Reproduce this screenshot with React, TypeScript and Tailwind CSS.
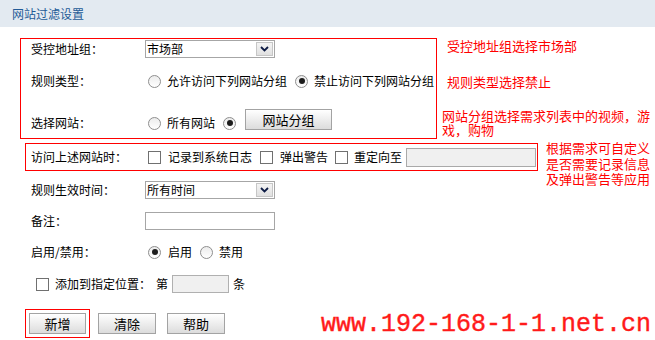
import React from 'react'

function Radio({ checked }: { checked?: boolean }) {
  return (
    <span className="flex h-[13px] w-[13px] shrink-0 items-center justify-center rounded-full border border-[#8e8e8e] bg-linear-to-b from-[#ececec] to-white">
      {checked && <span className="h-[6px] w-[6px] rounded-full bg-[#1c1c1c]" />}
    </span>
  )
}

function Checkbox() {
  return <span className="block h-[13px] w-[13px] shrink-0 border border-[#707070] bg-white" />
}

function Select({ value }: { value: string }) {
  return (
    <div className="flex h-[18px] w-[130px] items-center border border-[#a6a6a6] bg-white">
      <span className="flex-1 pl-[1px] leading-none">{value}</span>
      <span className="mr-[1px] flex h-[14px] w-[17px] items-center justify-center border border-[#c6c6c6] bg-linear-to-b from-[#f4f4f4] to-[#e0e0e0]">
        <svg width="9" height="6" viewBox="0 0 9 6">
          <path d="M1 1 L4.5 4.5 L8 1" stroke="#0d1b45" strokeWidth="1.8" fill="none" />
        </svg>
      </span>
    </div>
  )
}

function Button({ label, className }: { label: string; className?: string }) {
  return (
    <div
      className={`flex h-[21px] items-center justify-center border border-[#a3a3a3] bg-linear-to-b from-white to-[#dcdcdc] text-[13px] leading-none ${className ?? ''}`}
    >
      {label}
    </div>
  )
}

export default function App() {
  return (
    <div className="h-[340px] w-[655px] overflow-hidden whitespace-nowrap bg-white font-['Noto_Sans_CJK_SC',sans-serif] text-[12px] text-black">
      <div className="flex h-[27px] items-center bg-[#e3eaf1] pl-[12px] text-[12px] text-[#235b97]">
        网站过滤设置
      </div>

      {/* 受控地址组 / 规则类型 / 选择网站 */}
      <div className="mt-[11px] flex items-start">
        <div className="ml-[20px] flex h-[101px] w-[417px] shrink-0 flex-col border border-[#ff0000] pl-[10px]">
          <div className="flex h-[20px] items-center">
            <span className="w-[114px]">受控地址组：</span>
            <Select value="市场部" />
          </div>
          <div className="mt-[12px] flex h-[20px] items-center">
            <span className="w-[114px]">规则类型：</span>
            <span className="ml-[3px]"><Radio /></span>
            <span className="ml-[6px]">允许访问下列网站分组</span>
            <span className="ml-[8px]"><Radio checked /></span>
            <span className="ml-[6px]">禁止访问下列网站分组</span>
          </div>
          <div className="mt-[22px] flex h-[20px] items-center">
            <span className="w-[114px]">选择网站：</span>
            <span className="ml-[3px]"><Radio /></span>
            <span className="ml-[6px]">所有网站</span>
            <span className="ml-[8px]"><Radio checked /></span>
            <Button label="网站分组" className="mb-[8px] ml-[9px] w-[87px]" />
          </div>
        </div>
        <div className="ml-[10px] flex flex-col text-[13px] text-[#ff0000]">
          <div className="leading-[16px]">受控地址组选择市场部</div>
          <div className="mt-[20px] leading-[16px]">规则类型选择禁止</div>
          <div className="mt-[19px] -ml-[5px] leading-[14px]">
            <div>网站分组选择需求列表中的视频，游</div>
            <div>戏，购物</div>
          </div>
        </div>
      </div>

      {/* 访问上述网站时 */}
      <div className="mt-[4px] flex h-[28px] items-start">
        <div className="ml-[25px] flex h-[28px] w-[513px] shrink-0 items-center border border-[#ff0000] pl-[5px] [&>*]:shrink-0">
          <span className="w-[117px]">访问上述网站时：</span>
          <Checkbox />
          <span className="ml-[7px]">记录到系统日志</span>
          <span className="ml-[8px]"><Checkbox /></span>
          <span className="ml-[7px]">弹出警告</span>
          <span className="ml-[7px]"><Checkbox /></span>
          <span className="ml-[6px]">重定向至</span>
          <span className="ml-[4px] h-[19px] w-[130px] border border-[#a9a9a9] bg-[#f0f0f0]" />
        </div>
        <div className="-mt-[3px] ml-[8px] text-[13px] leading-[15.5px] text-[#ff0000]">
          <div>根据需求可自定义</div>
          <div>是否需要记录信息</div>
          <div>及弹出警告等应用</div>
        </div>
      </div>

      <div className="mt-[10px] flex h-[18px] items-center pl-[31px]">
        <span className="w-[114px]">规则生效时间：</span>
        <Select value="所有时间" />
      </div>

      <div className="mt-[13px] flex h-[18px] items-center pl-[31px]">
        <span className="w-[114px]">备注：</span>
        <span className="h-[18px] w-[130px] border border-[#a6a6a6] bg-white" />
      </div>

      <div className="mt-[15px] flex h-[14px] items-center pl-[31px]">
        <span className="w-[114px]">启用/禁用：</span>
        <span className="ml-[3px]"><Radio checked /></span>
        <span className="ml-[7px]">启用</span>
        <span className="ml-[8px]"><Radio /></span>
        <span className="ml-[6px]">禁用</span>
      </div>

      <div className="mt-[16px] flex h-[18px] items-center pl-[36px]">
        <Checkbox />
        <span className="ml-[6px]">添加到指定位置：</span>
        <span className="ml-[5px]">第</span>
        <span className="ml-[4px] h-[18px] w-[57px] border border-[#b0b0b0] bg-[#f0f0f0]" />
        <span className="ml-[4px]">条</span>
      </div>

      <div className="mt-[16px] flex h-[28px] items-center pl-[25px]">
        <div className="border border-[#ff0000] p-[3px]">
          <Button label="新增" className="w-[57px]" />
        </div>
        <Button label="清除" className="ml-[8px] w-[58px]" />
        <Button label="帮助" className="ml-[11px] w-[58px]" />
        <div className="ml-auto self-end pr-[4px] font-['Liberation_Mono',monospace] text-[25px] leading-[25px] text-[#ff1a1a] [-webkit-text-stroke:0.4px_#ff1a1a]">
          www.192-168-1-1.net.cn
        </div>
      </div>
    </div>
  )
}
